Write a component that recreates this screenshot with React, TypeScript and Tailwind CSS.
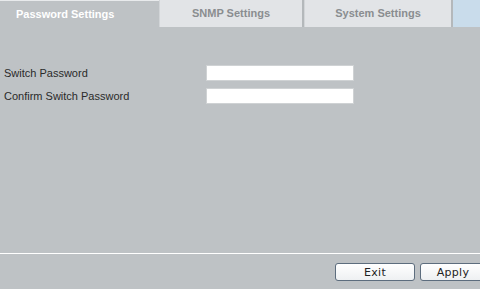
import React from 'react';

const tabs = ['Password Settings', 'SNMP Settings', 'System Settings'];

export default function App() {
  return (
    <div className="w-[480px] h-[289px] bg-[#bec2c5] flex flex-col overflow-hidden font-['Liberation_Sans',Arial,sans-serif]">
      <div className="flex h-[28px]">
        <div className="w-[159px] border-t border-[#e8eaec] flex items-center pl-[16px] text-[11px] font-bold text-white">
          {tabs[0]}
        </div>
        <div className="w-[145px] h-[27px] bg-[#e2e4e7] border-l border-[#d2d5d8] border-r-2 border-r-[#b4b8bb] flex items-center justify-center text-[11px] font-bold text-[#8a8d90]">
          {tabs[1]}
        </div>
        <div className="w-[149px] h-[27px] bg-[#e2e4e7] border-l border-[#d2d5d8] border-r-2 border-r-[#b4b8bb] flex items-center justify-center text-[11px] font-bold text-[#8a8d90]">
          {tabs[2]}
        </div>
        <div className="flex-1 h-[27px] bg-[#c9dceb]" />
      </div>

      <div className="pt-[37px] pl-[4px] flex flex-col gap-[7px]">
        <div className="flex items-center h-[16px]">
          <span className="w-[202px] text-[11px] text-[#2a2a2a]">Switch Password</span>
          <input className="w-[148px] h-[16px] bg-white border border-[#cfd2d4] outline-none" />
        </div>
        <div className="flex items-center h-[16px]">
          <span className="w-[202px] text-[11px] text-[#2a2a2a]">Confirm Switch Password</span>
          <input type="password" className="w-[148px] h-[16px] bg-white border border-[#cfd2d4] outline-none" />
        </div>
      </div>

      <div className="mt-auto">
        <div className="h-[1px] bg-white mb-[9px]" />
        <div className="flex justify-end gap-[5px] pb-[8px] -mr-[6px]">
          <button className="w-[80px] h-[18px] bg-gradient-to-b from-white to-[#eef0f2] border border-[#5d6d7e] rounded-[3px] text-[11px] text-[#222] font-['DejaVu_Sans',sans-serif] tracking-[0.3px] leading-none">
            Exit
          </button>
          <button className="w-[66px] h-[18px] bg-gradient-to-b from-white to-[#eef0f2] border border-[#5d6d7e] rounded-[3px] text-[11px] text-[#222] font-['DejaVu_Sans',sans-serif] tracking-[0.3px] leading-none">
            Apply
          </button>
        </div>
      </div>
    </div>
  );
}
